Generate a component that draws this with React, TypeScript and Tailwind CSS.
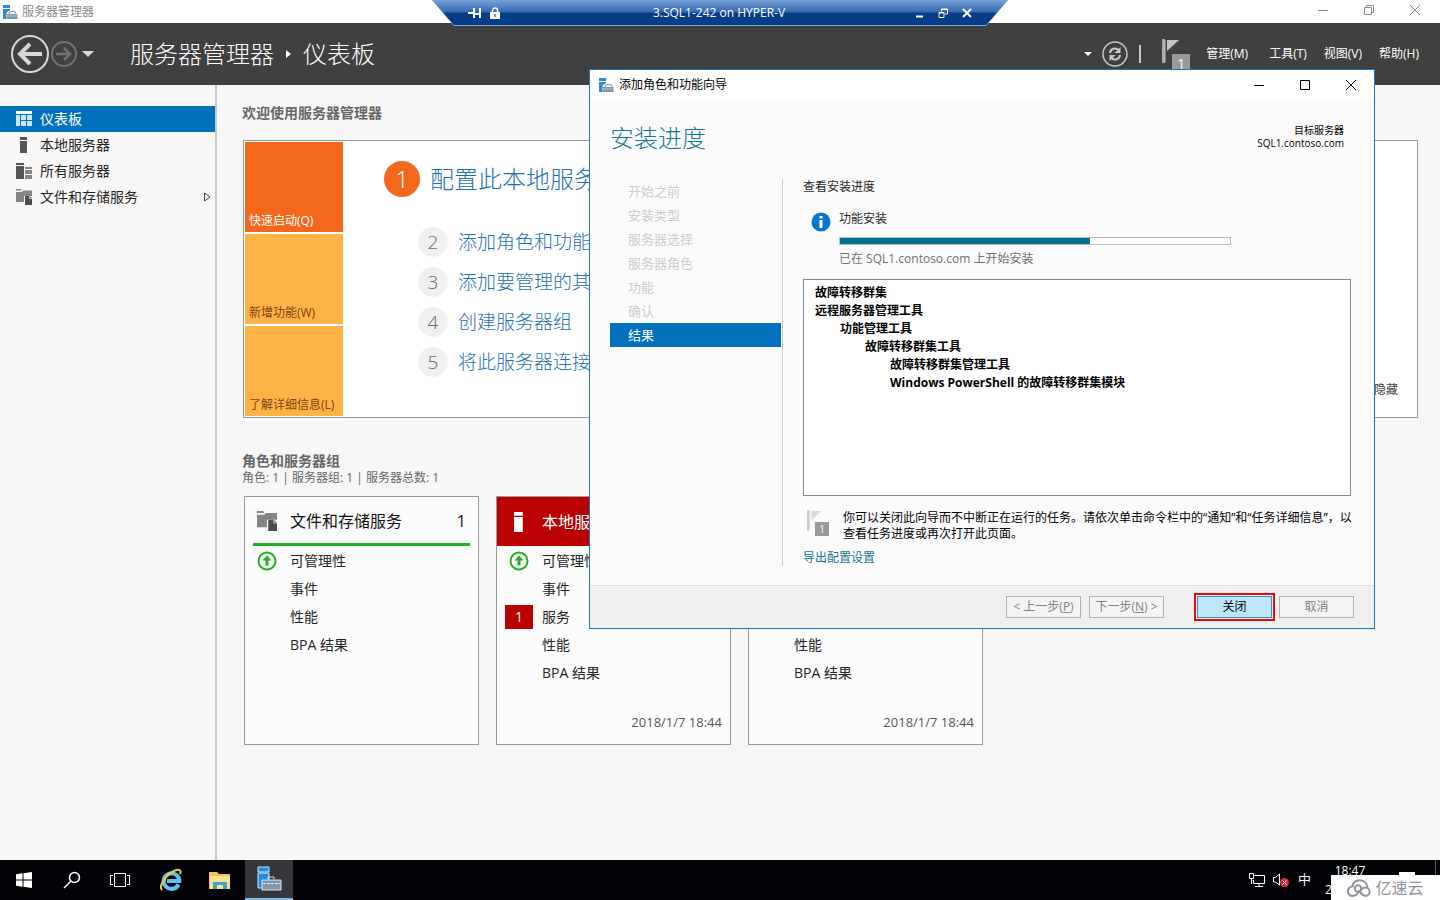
import { useState } from 'react';
import type { ReactNode } from 'react';

interface Row {
  label: string;
  status?: 'ok' | 'error';
}

interface Tile {
  title: string;
  icon: 'storage' | 'server' | 'servers';
  alert: boolean;
  rows: Row[];
  date?: string;
}

const serverRows: Row[] = [
  { label: '可管理性', status: 'ok' },
  { label: '事件' },
  { label: '服务', status: 'error' },
  { label: '性能' },
  { label: 'BPA 结果' },
];

const tiles: Tile[] = [
  {
    title: '文件和存储服务',
    icon: 'storage',
    alert: false,
    rows: [{ label: '可管理性', status: 'ok' }, { label: '事件' }, { label: '性能' }, { label: 'BPA 结果' }],
  },
  { title: '本地服务器', icon: 'server', alert: true, rows: serverRows, date: '2018/1/7 18:44' },
  { title: '所有服务器', icon: 'servers', alert: true, rows: serverRows, date: '2018/1/7 18:44' },
];

const navItems = [
  { label: '仪表板', icon: 'dashboard' },
  { label: '本地服务器', icon: 'server' },
  { label: '所有服务器', icon: 'servers' },
  { label: '文件和存储服务', icon: 'storage' },
];

const tasks = ['添加角色和功能', '添加要管理的其他服务器', '创建服务器组', '将此服务器连接到云服务'];

const steps = ['开始之前', '安装类型', '服务器选择', '服务器角色', '功能', '确认', '结果'];

const features = [
  { label: '故障转移群集', indent: 0 },
  { label: '远程服务器管理工具', indent: 0 },
  { label: '功能管理工具', indent: 1 },
  { label: '故障转移群集工具', indent: 2 },
  { label: '故障转移群集管理工具', indent: 3 },
  { label: 'Windows PowerShell 的故障转移群集模块', indent: 3 },
];

function ManagerIcon({ className }: { className: string }) {
  return (
    <svg viewBox="0 0 16 16" className={className}>
      <path d="M1 1h7v3H1z" fill="#2a8dd4" />
      <path d="M1 5h7v1.500C5.500 7 4.500 8 4.500 9.500V15H1z" fill="#2a8dd4" />
      <path d="M5 10h10.500v5H5z" fill="#7b97ab" />
      <path d="M7 9.500c1-3 6-3 7 0" fill="none" stroke="#7b97ab" strokeWidth="1.200" />
      <path d="M5 12h10.500" stroke="#dfe9f0" strokeWidth=".6" />
    </svg>
  );
}

function NavIcon({ name, className }: { name: string; className: string }) {
  if (name === 'dashboard') {
    return (
      <svg viewBox="0 0 16 16" className={className} fill="currentColor">
        <path d="M0 0h16v3H0z" />
        <path d="M0 4h4v11H0zM5 4h5v5H5zM11 4h5v5h-5zM5 10h5v5H5zM11 10h5v5h-5z" opacity=".8" />
      </svg>
    );
  }
  if (name === 'server') {
    return (
      <svg viewBox="0 0 16 16" className={className} fill="currentColor">
        <path d="M4 0h7v3H4zM4 4h7v12H4z" />
      </svg>
    );
  }
  if (name === 'servers') {
    return (
      <svg viewBox="0 0 16 16" className={className} fill="currentColor">
        <path d="M0 0h8v2H0zM0 3h8v13H0z" />
        <path d="M9 4h7v2H9zM9 7h7v4H9zM9 12h7v4H9z" opacity=".7" />
      </svg>
    );
  }
  return (
    <svg viewBox="0 0 16 16" className={className}>
      <path d="M0 0h5l1 1.500H0zM0 3h6l1-1.500h9V7H8v6H0z" fill="#858585" />
      <path d="M9 7h4.500L16 9.500V16H9z" fill="#4d4d4d" />
      <path d="M13.500 7v2.500H16" fill="none" stroke="#d5d5d5" strokeWidth=".8" />
    </svg>
  );
}

function Flag({ className }: { className: string }) {
  return (
    <svg viewBox="0 0 28 30" className={className}>
      <path d="M0 0h3v24H0z" fill="#a9a9a9" />
      <path d="M5 1h12L5 12z" fill="#c4c4c4" />
      <path d="M3 1v22" stroke="#c4c4c4" />
    </svg>
  );
}

function RemoteBar() {
  return (
    <div className="absolute left-1/2 top-0 h-[26px] w-[576px] -translate-x-1/2 bg-[#7ea6d8] [clip-path:polygon(0_0,100%_0,96.200%_100%,3.800%_100%)]">
      <div className="flex h-[25px] items-center bg-linear-to-b from-[#77a2d8] from-0% via-[#3468b0] via-48% to-[#053d87] to-52% px-9 text-white [clip-path:polygon(0_0,100%_0,96.200%_100%,3.800%_100%)]">
        <button aria-label="固定" className="mr-1.5 flex h-5 w-4 items-center">
          <svg viewBox="0 0 14 12" className="h-3 w-3.5" fill="none" stroke="#fff" strokeWidth="2">
            <path d="M0 6h6M6 1v10M12 1v10M6 7h6" />
          </svg>
        </button>
        <svg viewBox="0 0 10 12" className="h-3 w-2.5">
          <path d="M2.500 5V3.500a2.500 2.500 0 0 1 5 0V5" fill="none" stroke="#fff" strokeWidth="1.500" />
          <path d="M0 5h10v7H0z" fill="#fff" />
          <path d="M4.500 7h1v3h-1z" fill="#053d87" />
        </svg>
        <span className="flex-1 pl-6 text-center text-xs">3.SQL1-242 on HYPER-V</span>
        <div className="flex items-center gap-3.5">
          <button aria-label="最小化">
            <svg viewBox="0 0 10 10" className="size-2.5"><path d="M2 8.500h7" stroke="#fff" strokeWidth="2" /></svg>
          </button>
          <button aria-label="还原">
            <svg viewBox="0 0 10 10" className="size-2.5" fill="none" stroke="#fff">
              <path d="M1 4.500h5v5H1zM1 5h5M3.500 3.500V1h6v5H7M3.500 1.500h6" />
            </svg>
          </button>
          <button aria-label="关闭连接">
            <svg viewBox="0 0 10 10" className="size-2.5"><path d="m1 1 8 8m0-8L1 9" stroke="#fff" strokeWidth="2" /></svg>
          </button>
        </div>
      </div>
    </div>
  );
}

function TitleBar() {
  return (
    <div className="flex h-[23px] items-center bg-white pl-0.5 pr-4 text-xs text-[#8a8a8a]">
      <ManagerIcon className="mr-1 size-4" />
      <span className="flex-1">服务器管理器</span>
      <div className="flex gap-9 pb-1 pr-1">
        <button aria-label="最小化">
          <svg viewBox="0 0 10 10" className="size-2.5" stroke="#8a8a8a"><path d="M0 5.500h10" /></svg>
        </button>
        <button aria-label="还原">
          <svg viewBox="0 0 10 10" className="size-2.5" fill="none" stroke="#8a8a8a">
            <path d="M.5 2.500h7v7h-7zM2.500 2.500v-2h7v7h-2" />
          </svg>
        </button>
        <button aria-label="关闭">
          <svg viewBox="0 0 10 10" className="size-2.5" stroke="#8a8a8a"><path d="m0 0 10 10M10 0 0 10" /></svg>
        </button>
      </div>
    </div>
  );
}

function Toolbar() {
  return (
    <header className="flex h-[62px] items-center bg-[#404040] pl-2.5 pr-[21px] text-white">
      <button aria-label="后退">
        <svg viewBox="0 0 40 40" className="size-10" fill="none" stroke="#d6d6d6">
          <circle cx="20" cy="20" r="18" strokeWidth="2" />
          <path d="M32 20H11" strokeWidth="4" />
          <path d="m20 10-10 10 10 10" strokeWidth="4" />
        </svg>
      </button>
      <button aria-label="前进">
        <svg viewBox="0 0 28 28" className="size-7" fill="none" stroke="#737373" strokeWidth="2">
          <circle cx="14" cy="14" r="12" />
          <path d="M6 14h14m-6-6 6 6-6 6" strokeWidth="2.500" />
        </svg>
      </button>
      <button aria-label="历史记录" className="ml-1">
        <svg viewBox="0 0 12 6" className="h-1.5 w-3" fill="#d6d6d6"><path d="M0 0h12L6 6z" /></svg>
      </button>
      <nav className="ml-9 flex flex-1 items-center text-2xl font-light">
        <span>服务器管理器</span>
        <svg viewBox="0 0 5 8" className="mx-3 h-2 w-[5px]" fill="#fff"><path d="M0 0l5 4-5 4z" /></svg>
        <span>仪表板</span>
      </nav>
      <div className="flex items-center text-xs">
        <svg viewBox="0 0 8 4" className="mr-2.5 h-1 w-2" fill="#fff"><path d="M0 0h8L4 4z" /></svg>
        <button aria-label="刷新">
          <svg viewBox="0 0 26 26" className="size-[26px]" fill="none" stroke="#c8c8c8">
            <circle cx="13" cy="13" r="12" strokeWidth="1.500" />
            <path d="M8 12a5 5 0 0 1 8.500-3M18 14a5 5 0 0 1-8.500 3" strokeWidth="2.200" />
            <path d="M18.500 6v6h-6zM7.500 20v-6h6z" fill="#c8c8c8" stroke="none" />
          </svg>
        </button>
        <span className="mx-[11px] h-[18px] w-0.5 bg-[#c8c8c8]" />
        <button aria-label="通知" className="relative ml-2.5 mr-4 flex h-[30px] w-7">
          <Flag className="h-[30px] w-7" />
          <span className="absolute left-2.5 top-[15px] h-4 w-[18px] bg-[#999] text-center text-sm leading-5">1</span>
        </button>
        <div className="flex gap-[17px]">
          <button className="mr-1">管理(M)</button>
          <button>工具(T)</button>
          <button>视图(V)</button>
          <button>帮助(H)</button>
        </div>
      </div>
    </header>
  );
}

function Sidebar() {
  const [active, setActive] = useState('仪表板');

  return (
    <aside className="w-[217px] shrink-0 border-r-2 border-[#c6c6c6] pt-[21px]">
      {navItems.map((item) => (
        <button
          key={item.label}
          onClick={() => setActive(item.label)}
          className={`flex h-[26px] w-full items-center gap-2 px-4 text-sm ${
            item.label === active ? 'bg-[#0072bc] text-white' : 'text-[#262626]'
          }`}
        >
          <NavIcon name={item.icon} className={`size-4 ${item.label === active ? '' : 'text-[#555]'}`} />
          <span className="flex-1 text-left">{item.label}</span>
          {item.icon === 'storage' && (
            <svg viewBox="0 0 7 10" className="-mr-3 h-2.5 w-[7px]" fill="none" stroke="#444"><path d="M.5 1v8L6 5z" /></svg>
          )}
        </button>
      ))}
    </aside>
  );
}

function WelcomeCard() {
  return (
    <section className="mx-px mt-[17px] flex border border-[#999] bg-white p-px">
      <div className="flex w-[98px] flex-col gap-0.5 text-xs">
        <button className="flex h-[90px] items-end bg-[#f4681d] px-1 pb-[3px] text-white">快速启动(Q)</button>
        <button className="flex h-[90px] items-end bg-[#fdb345] px-1 pb-[3px] text-[#7d4310]">新增功能(W)</button>
        <button className="flex h-[90px] items-end bg-[#fdb345] px-1 pb-[3px] text-[#7d4310]">了解详细信息(L)</button>
      </div>
      <div className="flex-1 pl-[41px] pt-[19px] font-light text-[#1f6fb5]">
        <div className="mb-[30px] flex items-center gap-2.5">
          <span className="flex size-9 items-center justify-center rounded-full bg-[#f4681d] text-2xl text-white">1</span>
          <a href="#local" className="text-2xl">配置此本地服务器</a>
        </div>
        <ol className="flex flex-col gap-2.5 pl-[34px]">
          {tasks.map((task, i) => (
            <li key={task} className="flex items-center gap-2.5">
              <span className="flex size-[30px] items-center justify-center rounded-full bg-[#f0f0f0] text-[19px] text-[#666]">
                {i + 2}
              </span>
              <a href="#task" className="text-[19px] leading-[30px]">{task}</a>
            </li>
          ))}
        </ol>
      </div>
      <button className="self-end pb-[18px] pr-[18px] text-xs text-[#404040]">隐藏</button>
    </section>
  );
}

function StatusTile({ tile }: { tile: Tile }) {
  return (
    <article className="flex h-[249px] w-[235px] flex-col border border-[#999] bg-[#fcfcfc]">
      <div className={`h-[49px] px-2 ${tile.alert ? 'bg-[#ba0000] text-white' : 'text-[#111]'}`}>
        <div className={`flex h-[49px] items-center px-1 text-base ${tile.alert ? '' : 'border-b-3 border-[#1fb41f] pt-0.5'}`}>
          <NavIcon name={tile.icon} className="mr-[13px] size-5" />
          <h3 className="flex-1">{tile.title}</h3>
          <span>1</span>
        </div>
      </div>
      <ul className="flex-1 pt-px text-sm text-[#262626]">
        {tile.rows.map((row) => (
          <li key={row.label} className="flex h-7 items-center">
            <span className="ml-2 mr-[9px] flex w-7 justify-center">
              {row.status === 'ok' && (
                <svg viewBox="0 0 20 20" className="size-5">
                  <circle cx="10" cy="10" r="8.500" fill="none" stroke="#1fb41f" strokeWidth="2" />
                  <path d="m10 4.500 4.500 5h-3v5h-3v-5h-3z" fill="#1fb41f" />
                </svg>
              )}
              {row.status === 'error' && <span className="h-6 w-7 bg-[#ba0000] text-center leading-6 text-white">1</span>}
            </span>
            {row.label}
          </li>
        ))}
      </ul>
      {tile.date && <time className="pb-3 pr-2 text-right text-[13px] text-[#555]">{tile.date}</time>}
    </article>
  );
}

function WizardButton({ children, primary }: { children: ReactNode; primary?: boolean }) {
  return (
    <button
      disabled={!primary}
      className={`h-[22px] w-[75px] border text-xs ${
        primary ? 'border-[#3c8dc5] bg-[#bee6fd] text-black' : 'border-[#adb2b5] bg-[#f4f4f4] text-[#838383]'
      }`}
    >
      {children}
    </button>
  );
}

function Wizard() {
  const progress = 64;

  return (
    <div
      role="dialog"
      aria-label="添加角色和功能向导"
      className="absolute right-[65px] top-[69px] flex w-[786px] flex-col border border-[#1a76b9] bg-[#fcfcfc] text-xs text-black"
    >
      <div className="flex h-[30px] items-center bg-white pl-2 pr-[18px]">
        <ManagerIcon className="mr-[5px] size-4" />
        <span className="flex-1">添加角色和功能向导</span>
        <div className="flex gap-9">
          <button aria-label="最小化">
            <svg viewBox="0 0 10 10" className="size-2.5" stroke="#000"><path d="M0 5.500h10" /></svg>
          </button>
          <button aria-label="最大化">
            <svg viewBox="0 0 10 10" className="size-2.5" fill="none" stroke="#000"><path d="M.5.5h9v9h-9z" /></svg>
          </button>
          <button aria-label="关闭">
            <svg viewBox="0 0 10 10" className="size-2.5" stroke="#000"><path d="m0 0 10 10M10 0 0 10" /></svg>
          </button>
        </div>
      </div>

      <div className="flex h-[79px] justify-between pl-5 pr-[30px] pt-[22px]">
        <h2 className="text-2xl font-light text-[#16758f]">安装进度</h2>
        <div className="pt-0.5 text-right text-[10px] leading-[13px]">
          <p>目标服务器</p>
          <p>SQL1.contoso.com</p>
        </div>
      </div>

      <div className="flex px-5 pb-[19px]">
        <ol className="w-[171px] shrink-0 text-[13px] leading-6">
          {steps.map((step) => (
            <li key={step} className={step === '结果' ? 'bg-[#0072bc] pl-[18px] text-white' : 'pl-[18px] text-[#cdcdcd]'}>
              {step}
            </li>
          ))}
        </ol>
        <div className="ml-px min-w-0 flex-1 border-l border-[#ccc] pl-5">
          <p className="text-[#262626]">查看安装进度</p>
          <div className="mt-4 flex gap-2 pl-2">
            <svg viewBox="0 0 20 20" className="mt-px size-5 shrink-0">
              <circle cx="10" cy="10" r="9.500" fill="#0b74d1" />
              <path d="M8.500 4h3v2.500h-3zM8.500 8h3v8h-3z" fill="#fff" />
            </svg>
            <div className="w-[392px]">
              <p className="mb-2.5 text-[#262626]">功能安装</p>
              <div role="progressbar" aria-valuenow={progress} className="h-2 border border-[#bcbcbc] bg-white">
                <div className="h-full bg-[#007192]" style={{ width: `${progress}%` }} />
              </div>
              <p className="mt-1.5 text-[#707070]">已在 SQL1.contoso.com 上开始安装</p>
            </div>
          </div>
          <ul className="mr-[3px] mt-3 h-[217px] border border-[#828790] bg-white pl-[11px] pt-1 font-bold leading-[18px]">
            {features.map((feature) => (
              <li key={feature.label} style={{ paddingLeft: feature.indent * 25 }}>{feature.label}</li>
            ))}
          </ul>
          <div className="mt-3.5 flex gap-3 pl-1">
            <div className="relative h-7 w-6 shrink-0">
              <Flag className="h-[26px] w-6 opacity-60" />
              <span className="absolute left-2 top-3 h-3.5 w-3.5 bg-[#999] text-center text-[10px] leading-[14px] text-white">1</span>
            </div>
            <p className="-mr-1 whitespace-normal leading-4">
              你可以关闭此向导而不中断正在运行的任务。请依次单击命令栏中的“通知”和“任务详细信息”，以查看任务进度或再次打开此页面。
            </p>
          </div>
          <a href="#export" className="mt-2 block w-fit text-[#16758f]">导出配置设置</a>
        </div>
      </div>

      <div className="flex h-[43px] items-center justify-end gap-2 border-t border-[#dfdfdf] bg-[#f0f0f0] pr-5">
        <WizardButton>&lt; 上一步(<u>P</u>)</WizardButton>
        <WizardButton>下一步(<u>N</u>) &gt;</WizardButton>
        <div className="-mr-1 ml-[22px] flex border-2 border-[#e00b0b] p-px">
          <WizardButton primary>关闭</WizardButton>
        </div>
        <WizardButton>取消</WizardButton>
      </div>
    </div>
  );
}

function Taskbar() {
  return (
    <footer className="relative flex h-10 items-center bg-[#020306] text-white">
      <button aria-label="开始" className="flex h-10 w-12 items-center justify-center">
        <svg viewBox="0 0 16 16" className="size-4" fill="#fff">
          <path d="M0 2.200 6.500 1.300v6.200H0zM7.500 1.200 16 0v7.500H7.500zM0 8.500h6.500v6.200L0 13.800zM7.500 8.500H16V16l-8.500-1.200z" />
        </svg>
      </button>
      <button aria-label="搜索" className="flex h-10 w-12 items-center justify-center">
        <svg viewBox="0 0 18 18" className="size-[18px]" fill="none" stroke="#fff" strokeWidth="1.500">
          <circle cx="11.500" cy="6.500" r="5" />
          <path d="m8 10-7 7" />
        </svg>
      </button>
      <button aria-label="任务视图" className="flex h-10 w-12 items-center justify-center">
        <svg viewBox="0 0 20 14" className="h-3.5 w-5" fill="none" stroke="#fff">
          <path d="M4.500.5h11v13h-11zM3 2.500H.5v9H3M17 2.500h2.500v9H17" />
        </svg>
      </button>
      <button aria-label="Internet Explorer" className="flex h-10 w-[54px] items-center justify-center">
        <svg viewBox="0 0 24 24" className="size-6" fill="none">
          <path d="M19.500 16.500a7.800 7.800 0 1 1 .8-3.500H8" stroke="#5cc4f3" strokeWidth="4" />
          <path d="M3 22C-1 18 8 6 15 3c4-2 8-1.500 6 3" stroke="#f3c93c" strokeWidth="2" />
        </svg>
      </button>
      <button aria-label="文件资源管理器" className="flex h-10 w-[47px] items-center justify-center pr-1">
        <svg viewBox="0 0 22 18" className="h-[18px] w-[22px]">
          <path d="M0 1h8l2 2h11v15H0z" fill="#f0c45a" />
          <path d="M1 5h20v13H1z" fill="#fbe08e" />
          <path d="M4 18v-7h14v7h-4v-4H8v4z" fill="#3ba4cf" />
        </svg>
      </button>
      <button aria-label="服务器管理器" className="flex h-10 w-12 items-center justify-center border-b-2 border-[#76b9ed] bg-[#35373b]">
        <svg viewBox="0 0 26 26" className="size-[26px]">
          <path d="M2 1h11v5H2zM2 7h11v15H2z" fill="#1f8de0" stroke="#cfe7f8" />
          <path d="M12 13v-2h6v2" fill="none" stroke="#dbe5ec" />
          <path d="M6 14h19v10H6z" fill="#7f98ab" stroke="#dbe5ec" />
          <path d="M7 17.500h17" stroke="#dbe5ec" strokeDasharray="3 1" />
        </svg>
      </button>
      <div className="flex flex-1 items-center justify-end pr-[65px]">
        <svg viewBox="0 0 16 14" className="mr-2 h-3.5 w-4" fill="none" stroke="#fff">
          <path d="M5.500 2.500h10v8H4.500V7M10 10.500v3M6 13.500h8M.5.5h4v5h-4zM2.500 6v5" />
        </svg>
        <svg viewBox="0 0 16 14" className="mr-[9px] h-3.5 w-4">
          <path d="M.5 4.500h2L6.500 1v11l-4-3h-2z" fill="none" stroke="#fff" />
          <circle cx="11.500" cy="9.500" r="4.500" fill="#d9293a" />
          <path d="m9.500 7.500 4 4m0-4-4 4" stroke="#fff" />
        </svg>
        <span className="mr-3.5 text-[13px]">中</span>
        <div className="text-center text-xs leading-[19px]">
          <p>18:47</p>
          <p>2018/1/7</p>
        </div>
      </div>
      <span className="absolute right-[25px] top-3 h-3 w-4 bg-white" />
      <span className="absolute right-1 top-0 h-4 w-px bg-[#555]" />
      <div className="absolute bottom-0 right-0 flex h-[25px] w-[109px] items-center justify-center gap-0.5 bg-white text-base text-[#8f949c]">
        <svg viewBox="0 0 26 18" className="h-[18px] w-[26px]" fill="none" stroke="#8f949c" strokeWidth="2">
          <path d="M6 7.500a4.700 4.700 0 1 0 .5 9.300c5 0 6-8.300 12-8.300a4 4 0 1 1 0 8.300c-3 0-4.500-2.500-6-4.500" />
          <path d="M5.500 8c0-9 14-9.500 15 .5" />
          <circle cx="11" cy="9.500" r="3.200" />
        </svg>
        <span>亿速云</span>
      </div>
    </footer>
  );
}

export default function App() {
  return (
    <div className="relative flex min-h-screen flex-col overflow-hidden whitespace-nowrap bg-[#f7f7f7] font-['Open_Sans','Noto_Sans_CJK_SC',sans-serif]">
      <TitleBar />
      <Toolbar />
      <div className="flex flex-1">
        <Sidebar />
        <main className="flex-1 pb-8 pl-[25px] pr-[21px] pt-[18px] text-[#666]">
          <h2 className="text-sm font-bold">欢迎使用服务器管理器</h2>
          <WelcomeCard />
          <h2 className="mt-[34px] text-sm font-bold leading-[18px]">角色和服务器组</h2>
          <p className="text-xs">角色: 1 | 服务器组: 1 | 服务器总数: 1</p>
          <div className="ml-0.5 mt-2.5 flex gap-[17px]">
            {tiles.map((tile) => (
              <StatusTile key={tile.title} tile={tile} />
            ))}
          </div>
        </main>
      </div>
      <Taskbar />
      <RemoteBar />
      <Wizard />
    </div>
  );
}
